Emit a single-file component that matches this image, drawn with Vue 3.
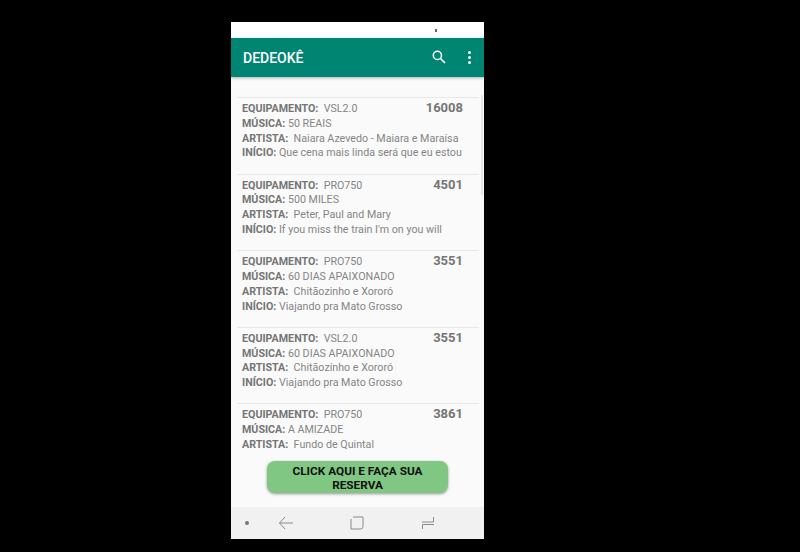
<template>
  <div class="page">
    <div class="phone">
      <div class="status-bar"><span class="status-dot"></span></div>

      <header class="app-bar">
        <span class="app-title">DEDEOKÊ</span>
        <div class="app-actions">
          <svg width="16" height="16" viewBox="0 0 16 16">
            <circle cx="6.4" cy="6.4" r="4.1" fill="none" stroke="#fff" stroke-width="1.5" />
            <path d="M9.5 9.5 L14 14" stroke="#fff" stroke-width="1.7" fill="none" />
          </svg>
          <div class="dots"><i></i><i></i><i></i></div>
        </div>
      </header>

      <main class="content">
        <div class="list">
          <div class="row" v-for="item in items" :key="item.code + item.equip + item.song">
            <div class="row-text">
              <p><b>EQUIPAMENTO:</b>&nbsp; {{ item.equip }}</p>
              <p><b>MÚSICA:</b> {{ item.song }}</p>
              <p><b>ARTISTA:</b>&nbsp; {{ item.artist }}</p>
              <p><b>INÍCIO:</b> {{ item.start }}</p>
            </div>
            <span class="code">{{ item.code }}</span>
          </div>
          <div class="scroll-thumb"></div>
        </div>
        <div class="action">
          <button class="reserve">CLICK AQUI E FAÇA SUA RESERVA</button>
        </div>
      </main>

      <nav class="nav-bar">
        <span class="nav-dot"></span>
        <svg class="nav-back" width="16" height="14" viewBox="0 0 16 14">
          <path d="M7 1 L1.5 7 L7 13 M1.5 7 H15" fill="none" stroke="#8a8a8a" stroke-width="1" />
        </svg>
        <svg class="nav-home" width="14" height="14" viewBox="0 0 14 14">
          <path d="M3 1 H13 V10.5 Q13 13 10.5 13 H1 V3" fill="none" stroke="#8a8a8a" stroke-width="1" />
        </svg>
        <svg class="nav-recent" width="14" height="14" viewBox="0 0 14 14">
          <path d="M1 6 H12.5 V1 M13 8.5 H1.5 V13" fill="none" stroke="#8a8a8a" stroke-width="1" />
        </svg>
      </nav>
    </div>
  </div>
</template>

<script setup>
const items = [
  { equip: 'VSL2.0', song: '50 REAIS', artist: 'Naiara Azevedo - Maiara e Maraísa', start: 'Que cena mais linda será que eu estou', code: '16008' },
  { equip: 'PRO750', song: '500 MILES', artist: 'Peter, Paul and Mary', start: "If you miss the train I'm on you will", code: '4501' },
  { equip: 'PRO750', song: '60 DIAS APAIXONADO', artist: 'Chitãozinho e Xororó', start: 'Viajando pra Mato Grosso', code: '3551' },
  { equip: 'VSL2.0', song: '60 DIAS APAIXONADO', artist: 'Chitãozinho e Xororó', start: 'Viajando pra Mato Grosso', code: '3551' },
  { equip: 'PRO750', song: 'A AMIZADE', artist: 'Fundo de Quintal', start: '', code: '3861' }
];
</script>

<style>
html, body {
  margin: 0;
  background: #000;
}
</style>

<style scoped>
.page {
  width: 800px;
  height: 552px;
  background: #000;
  padding: 22px 0 0 231px;
  box-sizing: border-box;
  font-family: Roboto, "Liberation Sans", sans-serif;
}

.phone {
  width: 253px;
  height: 517px;
  display: flex;
  flex-direction: column;
  background: #fafafa;
}

.status-bar {
  height: 16px;
  background: #fff;
  display: flex;
  justify-content: flex-end;
  padding: 7px 47px 0 0;
  box-sizing: border-box;
}

.status-dot {
  width: 2px;
  height: 3px;
  background: #666;
}

.app-bar {
  height: 39px;
  background: #008573;
  box-shadow: 0 1px 3px rgba(0, 0, 0, 0.3);
  display: flex;
  align-items: center;
  justify-content: space-between;
  padding: 0 13px 0 12px;
  z-index: 1;
}

.app-title {
  color: #fff;
  font-size: 14px;
  font-weight: 500;
}

.app-actions {
  display: flex;
  align-items: center;
  gap: 21px;
}

.app-actions svg {
  margin-top: -1px;
}

.dots {
  display: flex;
  flex-direction: column;
  gap: 2px;
}

.dots i {
  width: 3px;
  height: 3px;
  border-radius: 50%;
  background: #fff;
}

.content {
  flex: 1;
  display: flex;
  flex-direction: column;
  min-height: 0;
}

.list {
  position: relative;
  height: 376px;
  overflow: hidden;
  padding: 20px 5px 0 6px;
  box-sizing: border-box;
}

.row {
  height: 76.6px;
  box-sizing: border-box;
  border-top: 1px solid #e8e8e8;
  padding: 3px 16px 0 5px;
  display: flex;
  justify-content: space-between;
  align-items: flex-start;
}

.row-text {
  flex: 1;
  min-width: 0;
  padding-top: 1px;
}

.row-text p {
  margin: 0;
  font-size: 10.7px;
  line-height: 14.8px;
  color: #858585;
  white-space: nowrap;
}

.row-text b {
  font-weight: 700;
  color: #757575;
}

.code {
  flex: none;
  font-size: 13px;
  font-weight: 700;
  color: #757575;
  line-height: 14px;
}

.scroll-thumb {
  position: absolute;
  top: 18px;
  right: 1px;
  width: 2px;
  height: 100px;
  background: #e6e6e6;
}

.action {
  flex: 1;
  display: flex;
  justify-content: center;
  align-items: flex-start;
  padding-top: 8px;
}

.reserve {
  width: 181px;
  height: 32px;
  border: none;
  border-radius: 8px;
  background: #81c784;
  box-shadow: 0 1px 3px rgba(0, 0, 0, 0.4);
  color: #111;
  font-family: inherit;
  font-size: 11.8px;
  font-weight: 700;
  line-height: 13.5px;
  padding: 3px 20px 0;
}

.nav-bar {
  height: 32px;
  background: #f1f1f1;
  display: flex;
  align-items: center;
  padding-left: 14px;
}

.nav-dot {
  width: 4px;
  height: 4px;
  border-radius: 50%;
  background: #777;
}

.nav-back { margin-left: 29px; }
.nav-home { margin-left: 56px; }
.nav-recent { margin-left: 57px; }
</style>
